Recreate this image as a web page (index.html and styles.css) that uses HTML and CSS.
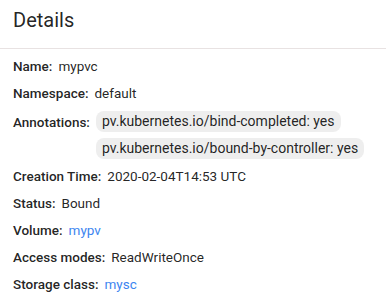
FILE: index.html
```html
<!DOCTYPE html>
<html>
<head>
<meta charset="utf-8">
<link rel="stylesheet" href="styles.css">
</head>
<body>
<div class="card">
  <div class="header"><h2 class="title">Details</h2></div>
  <div class="content">
    <div class="row"><span class="label">Name:</span><span class="value">mypvc</span></div>
    <div class="row"><span class="label">Namespace:</span><span class="value">default</span></div>
    <div class="row chips-row"><span class="label">Annotations:</span>
      <div class="chips">
        <span class="chip">pv.kubernetes.io/bind-completed: yes</span>
        <span class="chip">pv.kubernetes.io/bound-by-controller: yes</span>
      </div>
    </div>
    <div class="row"><span class="label">Creation Time:</span><span class="value">2020-02-04T14:53 UTC</span></div>
    <div class="row"><span class="label">Status:</span><span class="value">Bound</span></div>
    <div class="row"><span class="label">Volume:</span><a class="link" href="#">mypv</a></div>
    <div class="row"><span class="label">Access modes:</span><span class="value">ReadWriteOnce</span></div>
    <div class="row"><span class="label">Storage class:</span><a class="link" href="#">mysc</a></div>
  </div>
</div>
</body>
</html>
```
FILE: styles.css
```css
html, body {
  margin: 0;
  padding: 0;
  background: #ffffff;
}
body {
  font-family: Roboto, "Noto Sans", sans-serif;
  color: rgba(0, 0, 0, 0.87);
}
.header {
  padding: 8px 13px 16px;
  border-bottom: 1px solid #e8e2e2;
}
.title {
  margin: 0;
  font-size: 20px;
  font-weight: 400;
  line-height: 24px;
}
.content {
  display: flex;
  flex-direction: column;
  gap: 8px;
  padding: 8px 13px;
  font-size: 13.5px;
  line-height: 19px;
}
.row {
  display: flex;
  align-items: baseline;
}
.label {
  font-size: 13.5px;
  font-weight: 500;
  margin-right: 6px;
}
.link {
  color: #3d85f0;
  text-decoration: none;
}
.chips-row {
  align-items: flex-start;
}
.chips-row .label {
  margin-top: 2px;
  margin-right: 6px;
}
.chips {
  display: flex;
  flex-direction: column;
  align-items: flex-start;
  gap: 6px;
}
.chip {
  font-size: 14px;
  background: #eeeeee;
  border-radius: 8px;
  padding: 1px 6px;
}
```
